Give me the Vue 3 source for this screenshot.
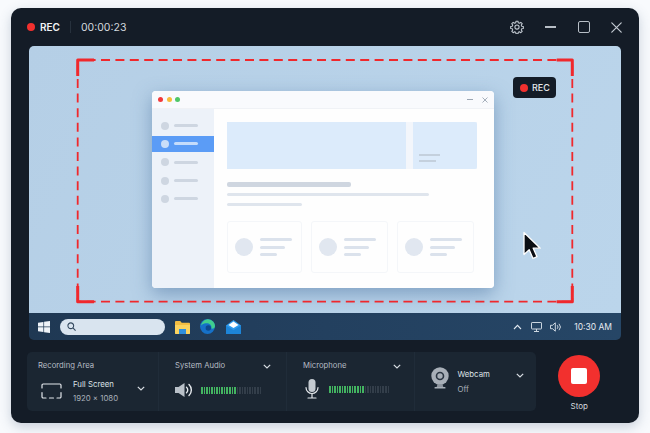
<template>
  <div class="page">
    <div class="recorder">
      <!-- title bar -->
      <header class="titlebar">
        <span class="rec-dot"></span>
        <span class="rec-label">REC</span>
        <span class="title-sep"></span>
        <span class="timer">00:00:23</span>
        <div class="title-actions">
          <svg class="gear" width="14" height="14" viewBox="0 0 24 24" fill="none" stroke="#c3cad2" stroke-width="1.800" stroke-linejoin="round">
            <path d="M10.3 2h3.4l.5 2.8 1.9.8 2.4-1.6 2.4 2.4-1.6 2.4.8 1.9 2.8.5v3.4l-2.8.5-.8 1.9 1.6 2.4-2.4 2.4-2.4-1.6-1.9.8-.5 2.8h-3.4l-.5-2.8-1.9-.8-2.4 1.6-2.4-2.4 1.6-2.4-.8-1.9-2.8-.5v-3.4l2.8-.5.8-1.9-1.6-2.4 2.4-2.4 2.4 1.6 1.9-.8z" />
            <circle cx="12" cy="12" r="3.600" />
          </svg>
          <span class="btn-min"></span>
          <span class="btn-max"></span>
          <svg class="btn-close" width="11" height="11" viewBox="0 0 11 11" stroke="#c3cad2" stroke-width="1.200" stroke-linecap="round">
            <path d="M.8.8l9.4 9.4M10.2.8L.8 10.2" />
          </svg>
        </div>
      </header>

      <!-- captured desktop -->
      <section class="preview">
        <div class="desktop">
          <div class="mock-window">
            <div class="mock-title">
              <div class="lights"><i class="red"></i><i class="yellow"></i><i class="green"></i></div>
              <div class="mock-actions">
                <span class="mock-min"></span>
                <svg width="6" height="6" viewBox="0 0 6 6" stroke="#9ba6b3" stroke-width=".9"><path d="M.5.5l5 5M5.500.5l-5 5" /></svg>
              </div>
            </div>
            <div class="mock-body">
              <aside class="mock-side">
                <div v-for="n in 5" :key="n" class="side-row" :class="{ active: n === 2 }">
                  <span class="side-dot"></span><span class="side-line"></span>
                </div>
              </aside>
              <div class="mock-main">
                <div class="banner">
                  <div class="banner-big"></div>
                  <div class="banner-small">
                    <span class="bs-line one"></span>
                    <span class="bs-line two"></span>
                  </div>
                </div>
                <div class="line head"></div>
                <div class="line mid"></div>
                <div class="line short"></div>
                <div class="cards">
                  <div v-for="n in 3" :key="n" class="card" :class="{ wide: n > 1 }">
                    <span class="card-dot"></span>
                    <div class="card-lines"><span class="l1"></span><span class="l2"></span><span class="l3"></span></div>
                  </div>
                </div>
              </div>
            </div>
          </div>

          <!-- selection frame -->
          <svg class="selection" width="592" height="267" viewBox="0 0 592 267" fill="none" stroke="#f0282c">
            <g stroke-width="1.800" stroke-dasharray="9 5.400" stroke-dashoffset="-8.900">
              <path d="M48.700 14H543.300" />
              <path d="M48.700 255.700H543.300" />
            </g>
            <g stroke-width="1.800" stroke-dasharray="9 5.600" stroke-dashoffset="-4.400">
              <path d="M48.700 14V255.700" />
              <path d="M543.300 14V255.700" />
            </g>
            <path stroke-width="3" stroke-linejoin="round" d="M65 14H48.700V30M527.700 14H543.300V30M65 255.700H48.700V240M527.700 255.700H543.300V240" />
          </svg>

          <div class="rec-badge"><span class="badge-dot"></span>REC</div>

          <svg class="cursor" width="20" height="30" viewBox="0 0 20 30">
            <path d="M2 1.500V23.500L7.200 18.800L11 27.500L15 25.700L11.200 17.200H18.200Z" fill="#0c0f14" stroke="#fff" stroke-width="1.300" stroke-linejoin="round" />
          </svg>
        </div>

        <div class="taskbar">
          <svg class="win-logo" width="12" height="12" viewBox="0 0 12 12" fill="#eef3f8">
            <path d="M0 1.700L5.400.9V5.600H0zM6.100.8L12 0V5.600H6.100zM0 6.300H5.400V11.100L0 10.300zM6.100 6.300H12V12L6.100 11.200z" />
          </svg>
          <div class="search">
            <svg width="9" height="9" viewBox="0 0 10 10" fill="none" stroke="#34495f" stroke-width="1.200"><circle cx="4.200" cy="4.200" r="3.200" /><path d="M6.600 6.600L9.500 9.500" /></svg>
          </div>
          <svg class="task-icon" width="15" height="14" viewBox="0 0 15 14">
            <path d="M0 2a1 1 0 0 1 1-1h4.200l1.500 1.800H14a1 1 0 0 1 1 1V13a1 1 0 0 1-1 1H1a1 1 0 0 1-1-1z" fill="#f3bd42" />
            <path d="M0 5h15v8a1 1 0 0 1-1 1H1a1 1 0 0 1-1-1z" fill="#fbd35f" />
            <rect x="4" y="9" width="7" height="5" fill="#2f8fdc" />
          </svg>
          <svg class="task-icon edge" width="15" height="15" viewBox="0 0 15 15">
            <circle cx="7.500" cy="7.500" r="7.500" fill="#1671c8" />
            <path d="M1 6.500C2 2 6 0 9 .4c3.500.5 6 3.500 6 6.600 0 2-1.800 3-3.600 2.600 .6-3-1.500-5.400-4.400-5.400C4.500 4.200 2.400 4.800 1 6.500z" fill="#3fce8e" />
            <circle cx="8.300" cy="9" r="2.700" fill="#0d4a8f" />
          </svg>
          <svg class="task-icon" width="15" height="14" viewBox="0 0 15 14">
            <path d="M0 5.500L7.500 0 15 5.500V14H0z" fill="#2d9bee" />
            <path d="M2.500 5L7.500 1.500 12.500 5 7.500 8z" fill="#fff" />
            <path d="M0 5.500L7.500 10 15 5.500V14H0z" fill="#1d85d8" />
          </svg>
          <div class="tray">
            <svg width="9" height="6" viewBox="0 0 9 6" fill="none" stroke="#dfe6ee" stroke-width="1.100"><path d="M1 5l3.500-3.600L8 5" /></svg>
            <svg class="tray-monitor" width="11" height="10" viewBox="0 0 11 10" fill="none" stroke="#dfe6ee" stroke-width=".9"><rect x=".5" y=".5" width="10" height="6.500" rx=".6" /><path d="M5.500 7v2M3 9.500h5" /></svg>
            <svg class="tray-speaker" width="12" height="10" viewBox="0 0 12 10" fill="none" stroke="#dfe6ee" stroke-width=".9"><path d="M.5 3.300h2L5.300.8v8.400L2.500 6.700h-2z" /><path d="M7.200 3.200a2.600 2.600 0 0 1 0 3.600M9 1.800a4.700 4.700 0 0 1 0 6.400" /></svg>
            <span class="clock">10:30 AM</span>
          </div>
        </div>
      </section>

      <!-- bottom controls -->
      <footer class="controls">
        <div class="panel">
          <div class="group area">
            <div class="label">Recording Area</div>
            <div class="area-body">
              <svg class="area-icon" width="21" height="16" viewBox="0 0 21 16" fill="none" stroke="#e3e7ec" stroke-width="1.200" stroke-linecap="round">
                <path d="M1 5V2.200A1.200 1.200 0 0 1 2.200 1H18.800A1.200 1.200 0 0 1 20 2.200V5M1 9.500v4.300A1.200 1.200 0 0 0 2.200 15H5M8.500 15h4M16 15h2.800A1.200 1.200 0 0 0 20 13.800V9.500" />
              </svg>
              <div class="area-text">
                <div class="name">Full Screen</div>
                <div class="sub">1920 × 1080</div>
              </div>
              <svg class="chev" width="8" height="5" viewBox="0 0 8 5" fill="none" stroke="#d8dde3" stroke-width="1.200"><path d="M.8.800L4 4 7.200.8" /></svg>
            </div>
          </div>

          <div class="group audio">
            <div class="head">
              <span class="label">System Audio</span>
              <svg class="chev" width="8" height="5" viewBox="0 0 8 5" fill="none" stroke="#d8dde3" stroke-width="1.200"><path d="M.8.800L4 4 7.200.8" /></svg>
            </div>
            <div class="meter-row">
              <svg class="speaker" width="18" height="16" viewBox="0 0 18 16">
                <path d="M0 5h3.500L9.500 1v14l-6-4H0z" fill="#b9c0c8" />
                <path d="M11.500 5.200a3.800 3.800 0 0 1 0 5.600M14 2.500a7.600 7.600 0 0 1 0 11" fill="none" stroke="#e4e8ec" stroke-width="1.400" stroke-linecap="round" />
              </svg>
              <div class="meter">
                <i v-for="n in bars" :key="n" :class="{ on: n <= 14 }"></i>
              </div>
            </div>
          </div>

          <div class="group audio mic-group">
            <div class="head">
              <span class="label">Microphone</span>
              <svg class="chev" width="8" height="5" viewBox="0 0 8 5" fill="none" stroke="#d8dde3" stroke-width="1.200"><path d="M.8.800L4 4 7.200.8" /></svg>
            </div>
            <div class="meter-row mic-row">
              <svg class="mic" width="14" height="20" viewBox="0 0 14 20">
                <rect x="3.500" y="0" width="7" height="13" rx="3.500" fill="#c3c9d0" />
                <path d="M1 8.500a6 6 0 0 0 12 0M7 14.500V18.500M3 19h8" fill="none" stroke="#e4e8ec" stroke-width="1.200" stroke-linecap="round" />
              </svg>
              <div class="meter">
                <i v-for="n in bars" :key="n" :class="{ on: n <= 14 }"></i>
              </div>
            </div>
          </div>

          <div class="group cam">
            <svg class="cam-icon" width="18" height="22" viewBox="0 0 18 22">
              <circle cx="9" cy="9" r="8.700" fill="#a8afb8" />
              <circle cx="9" cy="9" r="4.300" fill="#2a3542" />
              <circle cx="9" cy="9" r="2.700" fill="#a8afb8" />
              <path d="M6.500 17h5l.8 3h-6.600z" fill="#8d959f" />
              <rect x="3.500" y="20" width="11" height="1.600" rx=".6" fill="#a8afb8" />
            </svg>
            <div class="cam-text">
              <div class="name">Webcam</div>
              <div class="sub">Off</div>
            </div>
            <svg class="chev" width="8" height="5" viewBox="0 0 8 5" fill="none" stroke="#d8dde3" stroke-width="1.200"><path d="M.8.800L4 4 7.200.8" /></svg>
          </div>
        </div>

        <div class="stop-wrap">
          <button class="stop"><span></span></button>
          <div class="stop-label">Stop</div>
        </div>
      </footer>
    </div>
  </div>
</template>

<script setup>
const bars = 24
</script>

<style>
html, body {
  margin: 0;
  background: #f8fafd;
}
</style>

<style scoped>
.page {
  width: 650px;
  height: 433px;
  box-sizing: border-box;
  padding: 8px 11px 10px;
  font-family: Inter, "Liberation Sans", sans-serif;
  overflow: hidden;
}
.recorder {
  height: 415px;
  background: #141c27;
  border-radius: 10px;
  box-shadow: 0 4px 12px rgba(60, 85, 115, 0.25);
  display: flex;
  flex-direction: column;
}

/* title bar */
.titlebar {
  height: 38px;
  flex: none;
  display: flex;
  align-items: center;
  padding-left: 16px;
  color: #fff;
}
.rec-dot {
  width: 8px;
  height: 8px;
  border-radius: 50%;
  background: #f2302e;
  margin-right: 5px;
}
.rec-label {
  font-size: 10px;
  font-weight: 600;
  color: #f1f3f5;
}
.title-sep {
  width: 1px;
  height: 12px;
  background: #27313d;
  margin: 0 10px;
}
.timer {
  font-size: 10.500px;
  color: #d5d9de;
}
.title-actions {
  margin-left: auto;
  display: flex;
  align-items: center;
  padding-right: 17px;
}
.gear {
  margin-right: 21px;
}
.btn-min {
  width: 11px;
  height: 1.500px;
  background: #b7bec6;
  margin-right: 22px;
}
.btn-max {
  width: 10px;
  height: 10px;
  border: 1.200px solid #b7bec6;
  border-radius: 2px;
  margin-right: 21px;
}

/* preview */
.preview {
  margin: 0 18px;
  height: 294px;
  flex: none;
  border-radius: 5px;
  overflow: hidden;
  display: flex;
  flex-direction: column;
}
.desktop {
  position: relative;
  height: 267px;
  background: linear-gradient(120deg, #b5cfe6, #bbd5eb);
  padding: 45px 0 0 123px;
  box-sizing: border-box;
}
.mock-window {
  width: 342px;
  height: 197px;
  background: #fff;
  border-radius: 4px;
  box-shadow: 0 6px 18px rgba(70, 110, 155, 0.5);
  display: flex;
  flex-direction: column;
  overflow: hidden;
}
.mock-title {
  height: 18px;
  flex: none;
  background: #f9fafd;
  border-bottom: 1px solid #f0f2f6;
  box-sizing: border-box;
  display: flex;
  align-items: center;
  justify-content: space-between;
  padding: 0 6px 0 6px;
}
.lights {
  display: flex;
  gap: 3.700px;
}
.lights i {
  width: 5px;
  height: 5px;
  border-radius: 50%;
}
.lights .red { background: #f2393a; }
.lights .yellow { background: #f8bd3a; }
.lights .green { background: #4fc767; }
.mock-actions {
  display: flex;
  align-items: center;
  gap: 9px;
}
.mock-min {
  width: 6px;
  height: 1px;
  background: #9ba6b3;
}
.mock-body {
  flex: 1;
  display: flex;
  min-height: 0;
}
.mock-side {
  width: 62px;
  flex: none;
  background: #edf2f9;
  padding-top: 8.700px;
  box-sizing: border-box;
}
.side-row {
  height: 16px;
  margin-bottom: 2.300px;
  display: flex;
  align-items: center;
  padding-left: 9px;
}
.side-dot {
  width: 8px;
  height: 8px;
  border-radius: 50%;
  background: #ced6e1;
}
.side-line {
  width: 24px;
  height: 3px;
  border-radius: 2px;
  background: #ced6e1;
  margin-left: 5px;
}
.side-row.active {
  background: #5b9cf6;
}
.side-row.active .side-dot {
  background: #c9def9;
}
.side-row.active .side-line {
  background: #c5dcfb;
}
.mock-main {
  flex: 1;
  padding: 13px 0 0 13px;
  background: #fefefe;
}
.banner {
  width: 250px;
  height: 47px;
  display: flex;
  background: #f3f6fb;
  justify-content: space-between;
}
.banner-big {
  width: 179px;
  background: #dcebfb;
}
.banner-small {
  width: 64px;
  background: #dcebfb;
  border-radius: 0 2px 2px 0;
  padding: 32px 0 0 6px;
  box-sizing: border-box;
  display: flex;
  flex-direction: column;
  gap: 3.500px;
}
.bs-line {
  height: 2px;
  background: #c4d0dd;
}
.bs-line.one { width: 21px; }
.bs-line.two { width: 17px; }
.line {
  border-radius: 2px;
  background: #dfe5ed;
}
.line.head {
  width: 124px;
  height: 4.500px;
  background: #cfd6e0;
  margin-top: 13px;
}
.line.mid {
  width: 202px;
  height: 3.500px;
  margin-top: 6px;
}
.line.short {
  width: 75px;
  height: 3.500px;
  margin-top: 6.500px;
}
.cards {
  display: flex;
  gap: 9px;
  margin-top: 15px;
}
.card {
  width: 75px;
  height: 52px;
  box-sizing: border-box;
  border: 1px solid #f4f6f9;
  border-radius: 3px;
  display: flex;
  align-items: center;
  padding-left: 6.500px;
}
.card.wide {
  width: 77px;
}
.card-dot {
  width: 18.500px;
  height: 18.500px;
  border-radius: 50%;
  background: #e1e7f0;
  flex: none;
}
.card-lines {
  margin-left: 7px;
  display: flex;
  flex-direction: column;
  gap: 4.500px;
}
.card-lines span {
  height: 3px;
  border-radius: 2px;
  background: #dbe2ec;
}
.card-lines .l1 { width: 32px; }
.card-lines .l2 { width: 25px; }
.card-lines .l3 { width: 17px; }

.selection {
  position: absolute;
  left: 0;
  top: 0;
}
.rec-badge {
  position: absolute;
  left: 484px;
  top: 31px;
  width: 43px;
  height: 21px;
  box-sizing: border-box;
  background: #141c27;
  border-radius: 4px;
  display: flex;
  align-items: center;
  padding-left: 6.500px;
  gap: 4.500px;
  color: #e6e9ec;
  font-size: 9px;
  font-weight: 500;
}
.badge-dot {
  width: 8px;
  height: 8px;
  border-radius: 50%;
  background: #f2302e;
}
.cursor {
  position: absolute;
  left: 493px;
  top: 185px;
}

/* taskbar */
.taskbar {
  height: 27px;
  flex: none;
  background: linear-gradient(90deg, #1f3853, #23405f 50%, #264666);
  display: flex;
  align-items: center;
  padding-left: 9px;
}
.search {
  width: 105px;
  height: 16px;
  margin-left: 10px;
  background: #d9e4ef;
  border-radius: 8px;
  display: flex;
  align-items: center;
  padding-left: 7px;
  box-sizing: border-box;
  margin-right: 10px;
}
.task-icon {
  margin-right: 10px;
}
.edge {
  margin-right: 11px;
}
.tray {
  margin-left: auto;
  display: flex;
  align-items: center;
  padding-right: 9px;
}
.tray-monitor {
  margin-left: 9px;
}
.tray-speaker {
  margin-left: 8px;
}
.clock {
  font-size: 8.500px;
  color: #e5eaf0;
  margin-left: 12px;
}

/* controls */
.controls {
  flex: 1;
  display: flex;
  padding: 12px 0 0 16px;
}
.panel {
  width: 509px;
  height: 59px;
  background: #1b2632;
  border-radius: 5px;
  display: flex;
}
.group {
  box-sizing: border-box;
  height: 100%;
  border-right: 1px solid #202c39;
}
.group:last-child {
  border-right: 0;
}
.label {
  font-size: 7.700px;
  color: #b6bcc4;
  line-height: 12px;
}
.area {
  width: 131.500px;
  padding: 8px 13px 0 11px;
}
.area-body {
  display: flex;
  align-items: center;
  margin-top: 6px;
}
.area-icon {
  margin-left: 3px;
  flex: none;
}
.area-text {
  margin-left: 11px;
}
.name {
  font-size: 7.800px;
  color: #dde1e6;
  line-height: 12px;
}
.sub {
  font-size: 7.800px;
  color: #a9b0b9;
  line-height: 12px;
  margin-top: 2px;
}
.area-body .chev {
  margin-left: auto;
  margin-top: -6px;
}
.audio {
  width: 128px;
  padding: 8px 15px 0 16.500px;
}
.mic-group {
  padding-right: 13px;
}
.head {
  display: flex;
  align-items: center;
  justify-content: space-between;
}
.meter-row {
  display: flex;
  align-items: center;
  margin-top: 10px;
}
.speaker {
  flex: none;
}
.meter {
  display: flex;
  gap: 1.050px;
  margin-left: 8px;
}
.meter i {
  width: 1.500px;
  height: 7px;
  background: #333e4a;
}
.meter i.on {
  background: #43b561;
}
.mic-row {
  margin-top: 7px;
  padding-left: 2px;
}
.mic-row .meter {
  margin-left: 10px;
}
.cam {
  flex: 1;
  display: flex;
  align-items: center;
  padding: 0 12px 0 16px;
}
.cam-icon {
  flex: none;
  margin-top: -8px;
}
.cam-text {
  margin-left: 9px;
  margin-top: -1px;
}
.cam-text .sub {
  margin-top: 3px;
}
.cam .chev {
  margin-left: auto;
  margin-top: -13px;
}

.stop-wrap {
  width: 86.600px;
  margin-top: 3px;
  display: flex;
  flex-direction: column;
  align-items: center;
}
.stop {
  width: 42px;
  height: 42px;
  border: 0;
  padding: 0;
  border-radius: 50%;
  background: #f2302e;
  display: flex;
  align-items: center;
  justify-content: center;
}
.stop span {
  width: 16px;
  height: 16px;
  border-radius: 2px;
  background: #fff;
}
.stop-label {
  font-size: 8px;
  color: #d5d9de;
  margin-top: 4px;
}
</style>
